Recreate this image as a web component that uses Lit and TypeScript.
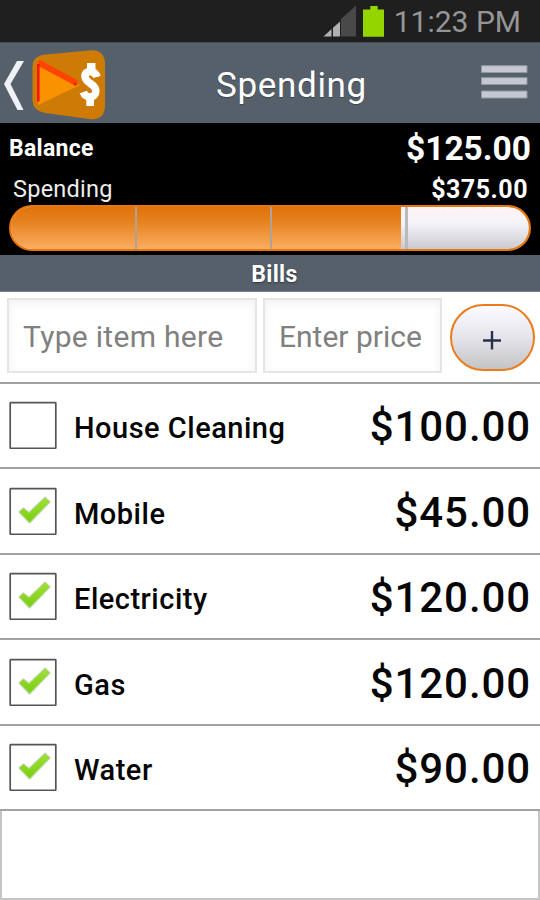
import { LitElement, html, css, svg, nothing } from "lit";
import { customElement, property, state } from "lit/decorators.js";

interface Bill {
  name: string;
  price: string;
  paid: boolean;
}

@customElement("check-box")
class CheckBox extends LitElement {
  @property({ type: Boolean }) checked = false;

  static styles = css`
    :host { display: block; width: 48px; height: 48px; flex: none; }
    svg { display: block; }
  `;

  render() {
    return html`<svg width="48" height="48" viewBox="0 0 48 48">
      <defs>
        <linearGradient id="tick" x1="0" y1="0" x2="0" y2="1">
          <stop offset="0" stop-color="#a0e03a" />
          <stop offset="1" stop-color="#77cf0c" />
        </linearGradient>
      </defs>
      <rect x="1.2" y="1.7" width="45.6" height="45.6" rx="0.5" fill="#fff" stroke="#555" stroke-width="1.7" />
      ${this.checked
        ? svg`<path d="M10 25 L14.4 20.8 L20 25.4 L36 10.2 L41.2 14.8 L20.6 36 Z"
            fill="url(#tick)" stroke="#b9d39a" stroke-width="1.1" stroke-linejoin="round" />`
        : nothing}
    </svg>`;
  }
}

@customElement("bill-row")
class BillRow extends LitElement {
  @property({ attribute: false }) bill!: Bill;

  static styles = css`
    :host {
      display: flex; align-items: center; box-sizing: border-box;
      height: 85.5px; padding: 0 9px 0 9px;
      border-bottom: 2px solid #a2a2a2;
      color: #060606; background: #fff;
    }
    .name { flex: 1; margin-left: 17px; padding-top: 7px; font-size: 29px; font-weight: 500; letter-spacing: 0.5px; white-space: nowrap; }
    .price { font-size: 42px; font-weight: 500; letter-spacing: 0.9px; padding-top: 4px; }
  `;

  render() {
    return html`
      <check-box .checked=${this.bill.paid}></check-box>
      <span class="name">${this.bill.name}</span>
      <span class="price">${this.bill.price}</span>
    `;
  }
}

@customElement("app-root")
class AppRoot extends LitElement {
  @state() private bills: Bill[] = [
    { name: "House Cleaning", price: "$100.00", paid: false },
    { name: "Mobile", price: "$45.00", paid: true },
    { name: "Electricity", price: "$120.00", paid: true },
    { name: "Gas", price: "$120.00", paid: true },
    { name: "Water", price: "$90.00", paid: true },
  ];

  static styles = css`
    :host {
      display: flex; flex-direction: column; width: 540px; height: 900px; overflow: hidden;
      background: #fff; font-family: Roboto, "Liberation Sans", sans-serif; line-height: 1;
    }
    .status {
      display: flex; align-items: center; justify-content: flex-end; box-sizing: border-box;
      height: 42px; padding-right: 19px; background: #1f1f1f; color: #969696; flex: none;
    }
    .status svg { flex: none; }
    .clock { font-size: 30px; margin-left: 9px; padding-top: 1px; letter-spacing: 0; }
    .header {
      display: flex; align-items: center; height: 81px; flex: none;
      background: #56606b; box-shadow: inset 0 1px #48515a; color: #fff;
    }
    .title { flex: 1; text-align: center; font-size: 35px; letter-spacing: 0.65px; padding-top: 5px; text-shadow: 0 1px 1px #3b444d; }
    .summary { height: 132px; flex: none; box-sizing: border-box; background: #000; color: #fff; padding: 7px 9px 0; }
    .line { display: flex; justify-content: space-between; align-items: center; white-space: nowrap; }
    .balance { height: 36px; font-weight: 700; }
    .balance-label { font-size: 23px; letter-spacing: 0.3px; }
    .balance-value { font-size: 33.5px; padding-top: 1px; }
    .spending { height: 38px; padding: 9px 3px 0 4px; box-sizing: border-box; color: #eee; font-size: 23.5px; letter-spacing: 0.25px; }
    .spending-value { font-weight: 700; color: #fff; font-size: 25px; letter-spacing: 0.5px; }
    .bar {
      display: grid; grid-template-columns: 126px 135px 133px 1fr; box-sizing: border-box;
      height: 45.5px; margin-top: 1px; width: 522px; border: 2px solid #e8780d; border-radius: 26px; overflow: hidden;
      background: linear-gradient(#fff4f6, #f4f3f8 40%, #c9c9ce) padding-box, #e8780d;
    }
    .full { background: linear-gradient(#e0720b, #e6821f 35%, #fbad62); border-right: 2px solid #b0a296; }
    .last { border-right: 0; margin-right: 4px; }
    .rest { border-left: 3px solid #bababd; }
    .section {
      display: flex; align-items: center; justify-content: center; height: 37px; flex: none; padding: 2px 0 0 9px; box-sizing: border-box;
      background: #56606b; box-shadow: inset 0 -1px #79818a; color: #fff; font-size: 23px; font-weight: 700; letter-spacing: 0.3px;
      text-shadow: 0 1px 2px #29323c;
    }
    .entry {
      display: flex; align-items: flex-start; gap: 6px; box-sizing: border-box; height: 91.5px; flex: none;
      padding: 6px 5px 0 7px; border-bottom: 2px solid #a0a0a0;
    }
    .field {
      display: flex; align-items: center; box-sizing: border-box; height: 75px; border: 2px solid #e4e6e4;
      background: #fff; box-shadow: inset 0 3px 8px #f0f0f0; color: #808080; font-size: 30px;
      padding: 2px 0 0 14px; white-space: nowrap;
    }
    .item { width: 250px; letter-spacing: 0.3px; }
    .cost { width: 179px; letter-spacing: 0; }
    .add {
      display: flex; align-items: center; justify-content: center; box-sizing: border-box;
      width: 85px; height: 67px; margin: 6px 0 0 2px; border: 2px solid #ea7c1c; border-radius: 34px;
      background: linear-gradient(#fcfbff, #e5e4ea 50%, #c4c4c6); flex: none;
    }
    .add svg { margin: 4px 2px 0 0; }
    .notes { flex: 1; border: 2px solid #c5c5c5; border-top: 0; }
  `;

  render() {
    return html`
      <div class="status">
        <svg width="64" height="42" viewBox="0 0 64 42">
          <path d="M20 19 L35 5.5 V36.5 H20 Z" fill="#494949" />
          <path d="M2.5 36.5 L10.5 29 V36.5 Z M12 27.8 L19 21.6 V36.5 H12 Z" fill="#b0b0b0" />
          <path d="M42 9.5 H49.3 V6 H56.7 V9.5 H63 V36.7 H42 Z" fill="#94d500" />
        </svg>
        <span class="clock">11:23 PM</span>
      </div>
      <div class="header">
        <svg width="110" height="80" viewBox="0 0 110 80">
          <path d="M17 18 H24 L10.5 41 L23.5 67 H17.5 L4 41 Z" fill="#eef2f6" />
          <path d="M44 11.8 L91 7.2 Q105 7 105 21 V62 Q105 77 91 76.2 L44 69.7 Q32.5 67.5 32.5 57 V24 Q32.5 13.5 44 11.8 Z" fill="#ce7b06" />
          <path d="M38 20 L80 42 L38 62 Z" fill="#fa9200" />
          <path d="M38 18.5 L40 17 L78 37.5 L77 42 L73 41.5 L38.3 23 Z" fill="#ff4300" />
          <path d="M38.3 21 V58.5" stroke="#ff1212" stroke-width="2.6" />
          <path d="M73 40 L77.5 41 L75 43 Z" fill="#e51a00" />
          <path d="M97 34 C95 27.5 85 26.5 85 33 C85 41 95.8 40 95.8 48 C95.8 55.5 85.5 56 83.3 49" fill="none" stroke="#fff" stroke-width="7.6" />
          <path d="M87 20 H95.5 V28 H87 Z M86.3 54 H94 V63 H86.3 Z" fill="#fff" />
        </svg>
        <span class="title">Spending</span>
        <svg width="67" height="80" viewBox="0 0 67 80">
          <path d="M8.5 22.7 H54 V29.5 H8.5 Z M8.5 34.7 H54 V41.5 H8.5 Z M8.5 48 H54 V55 H8.5 Z" fill="#c5c8d2" stroke="#9299a3" stroke-width="1" />
        </svg>
      </div>
      <div class="summary">
        <div class="line balance">
          <span class="balance-label">Balance</span><span class="balance-value">$125.00</span>
        </div>
        <div class="line spending">
          <span>Spending</span><span class="spending-value">$375.00</span>
        </div>
        <div class="bar">
          <div class="full"></div><div class="full"></div><div class="full last"></div><div class="rest"></div>
        </div>
      </div>
      <div class="section">Bills</div>
      <div class="entry">
        <div class="field item">Type item here</div>
        <div class="field cost">Enter price</div>
        <div class="add">
          <svg width="20" height="20" viewBox="0 0 20 20"><path d="M10 1 V19.5 M1 10.5 H19" stroke="#26304f" stroke-width="2.4" /></svg>
        </div>
      </div>
      ${this.bills.map((bill) => html`<bill-row .bill=${bill}></bill-row>`)}
      <div class="notes"></div>
    `;
  }
}
